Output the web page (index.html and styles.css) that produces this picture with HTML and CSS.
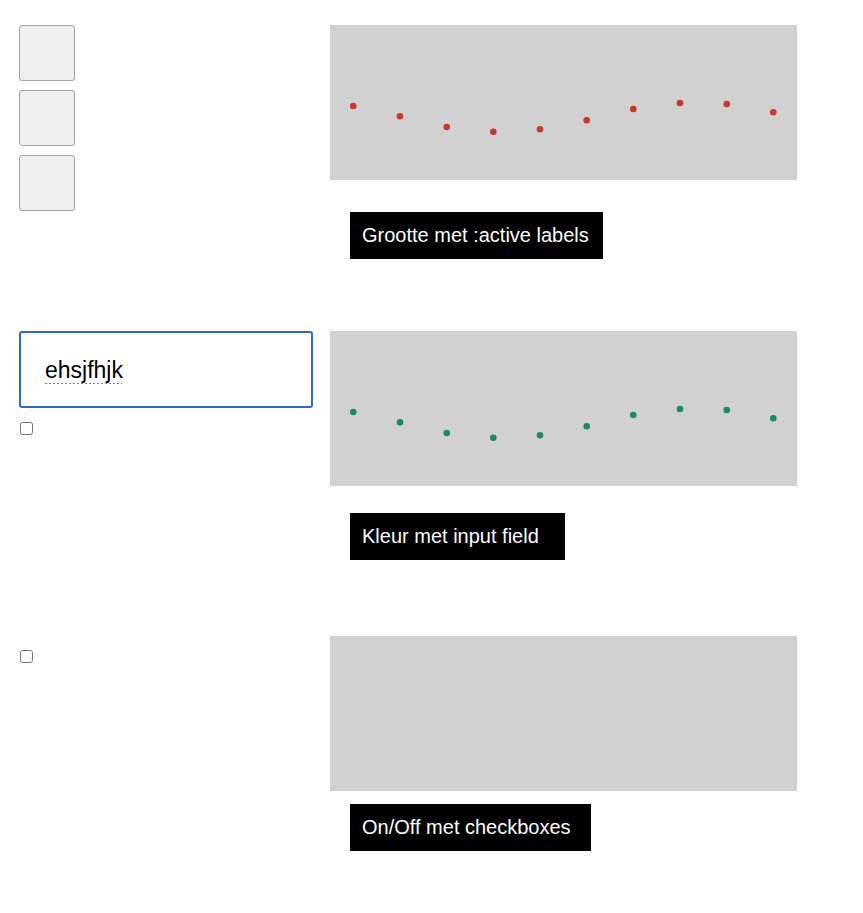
FILE: index.html
```html
<!DOCTYPE html>
<html>
<head>
<meta charset="utf-8">
<link rel="stylesheet" href="styles.css">
</head>
<body>
<div class="page">
  <section class="row row-1">
    <div class="controls buttons">
      <button class="sq"></button>
      <button class="sq"></button>
      <button class="sq"></button>
    </div>
    <div class="vis">
      <svg class="panel" width="467" height="155" viewBox="0 0 467 155">
        <rect width="467" height="155" fill="#d1d1d1"/>
        <g fill="#c9372c">
          <circle cx="23.3" cy="81" r="3.3"/>
          <circle cx="70" cy="91.3" r="3.3"/>
          <circle cx="116.7" cy="102" r="3.3"/>
          <circle cx="163.3" cy="106.7" r="3.3"/>
          <circle cx="210" cy="104.3" r="3.3"/>
          <circle cx="256.7" cy="95.3" r="3.3"/>
          <circle cx="303.3" cy="84" r="3.3"/>
          <circle cx="350" cy="78" r="3.3"/>
          <circle cx="396.7" cy="79" r="3.3"/>
          <circle cx="443.3" cy="87.3" r="3.3"/>
        </g>
      </svg>
      <div class="label label-1">Grootte met :active labels</div>
    </div>
  </section>

  <section class="row row-2">
    <div class="controls">
      <input class="field" type="text" value="ehsjfhjk" spellcheck="false">
      <input class="check check-2" type="checkbox">
    </div>
    <div class="vis">
      <svg class="panel" width="467" height="155" viewBox="0 0 467 155">
        <rect width="467" height="155" fill="#d1d1d1"/>
        <g fill="#1b8a5f">
          <circle cx="23.3" cy="81" r="3.3"/>
          <circle cx="70" cy="91.3" r="3.3"/>
          <circle cx="116.7" cy="102" r="3.3"/>
          <circle cx="163.3" cy="106.7" r="3.3"/>
          <circle cx="210" cy="104.3" r="3.3"/>
          <circle cx="256.7" cy="95.3" r="3.3"/>
          <circle cx="303.3" cy="84" r="3.3"/>
          <circle cx="350" cy="78" r="3.3"/>
          <circle cx="396.7" cy="79" r="3.3"/>
          <circle cx="443.3" cy="87.3" r="3.3"/>
        </g>
      </svg>
      <div class="label label-2">Kleur met input field</div>
    </div>
  </section>

  <section class="row row-3">
    <div class="controls">
      <input class="check check-3" type="checkbox">
    </div>
    <div class="vis">
      <svg class="panel" width="467" height="155" viewBox="0 0 467 155">
        <rect width="467" height="155" fill="#d1d1d1"/>
      </svg>
      <div class="label label-3">On/Off met checkboxes</div>
    </div>
  </section>
</div>
</body>
</html>
```

FILE: styles.css
```css
html, body {
  margin: 0;
  padding: 0;
  background: #ffffff;
  font-family: "Liberation Sans", Arial, Helvetica, sans-serif;
}

.page {
  padding: 25px 0 0 19px;
}

.row {
  display: flex;
  gap: 17px;
  align-items: flex-start;
}

.row-2 {
  margin-top: 72px;
}

.row-3 {
  margin-top: 76px;
}

.controls {
  width: 294px;
  display: flex;
  flex-direction: column;
  align-items: flex-start;
}

.buttons {
  gap: 9.5px;
}

.sq {
  width: 56px;
  height: 55.5px;
  margin: 0;
  padding: 0;
  background: #efefef;
  border: 1px solid #a3a3a3;
  border-radius: 3px;
  box-sizing: border-box;
}

.vis {
  display: flex;
  flex-direction: column;
  align-items: flex-start;
}

.panel {
  display: block;
}

.label {
  background: #000000;
  color: #ffffff;
  font-size: 20px;
  line-height: 23px;
  padding: 12px 12px;
  margin-left: 20px;
  white-space: nowrap;
}

.label-1 {
  margin-top: 32px;
  padding-right: 14px;
}

.label-2 {
  margin-top: 27px;
  padding-right: 26px;
}

.label-3 {
  margin-top: 13px;
  padding-right: 20px;
}

.field {
  width: 294px;
  height: 77px;
  box-sizing: border-box;
  margin: 0;
  padding: 2px 10px 0 24px;
  border: 2px solid #2f66d6;
  border-radius: 3px;
  outline: none;
  font-family: "Liberation Sans", Arial, Helvetica, sans-serif;
  font-size: 23px;
  color: #000000;
  text-decoration: underline dotted #e4504a;
  text-underline-offset: 5px;
  text-decoration-thickness: 2px;
}

.check {
  width: 13px;
  height: 13px;
  margin: 0 0 0 1px;
}

.check-2 {
  margin-top: 14px;
}

.check-3 {
  margin-top: 14px;
}
```
